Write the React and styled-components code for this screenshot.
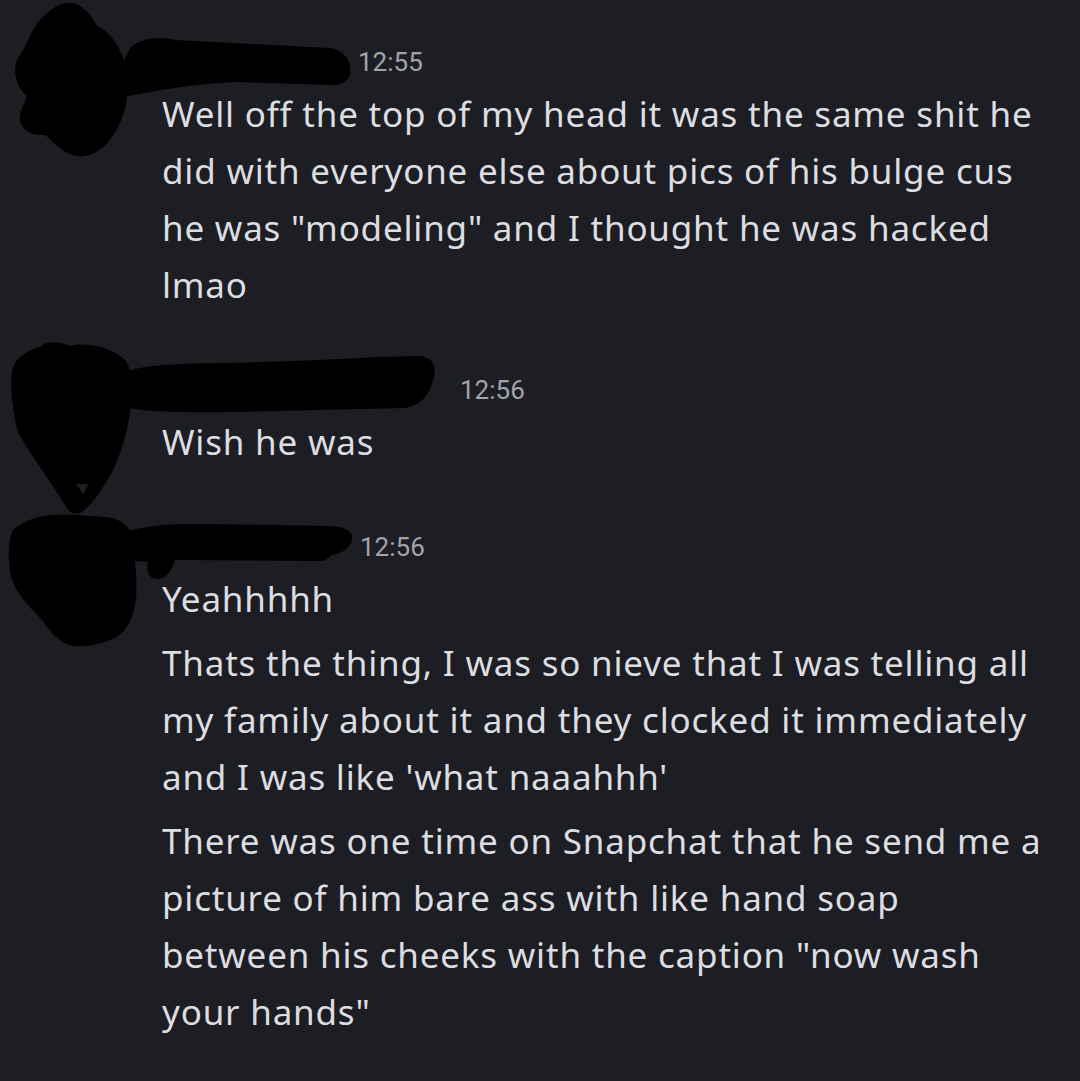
import React from "react";
import styled, { createGlobalStyle } from "styled-components";

const GlobalStyle = createGlobalStyle`
  html, body {
    margin: 0;
    padding: 0;
    background: #1d1e23;
  }
  body {
    font-family: "Noto Sans", "Open Sans", sans-serif;
    -webkit-font-smoothing: antialiased;
  }
`;

const Page = styled.div`
  min-height: 1081px;
  background: #1d1e23;
  padding: 45px 34px 0 0;
  box-sizing: border-box;
  display: flex;
  flex-direction: column;
  gap: 60px;
`;

const Message = styled.div`
  position: relative;
  display: grid;
  grid-template-columns: 162px 1fr;
`;

const AvatarSlot = styled.div`
  width: 162px;
`;

const Body = styled.div`
  display: flex;
  flex-direction: column;
  min-width: 0;
`;

const Header = styled.div`
  display: flex;
  align-items: center;
  height: 34px;
  margin-bottom: 6px;
  gap: 6px;
`;

const Name = styled.span`
  display: inline-block;
  width: ${(p) => p.$width}px;
  height: 30px;
`;

const Time = styled.span`
  font-family: Roboto, "Noto Sans", sans-serif;
  font-size: 26px;
  color: #a1a4ab;
`;

const Paragraph = styled.p`
  margin: 0;
  font-size: 35px;
  letter-spacing: 0.8px;
  line-height: 57px;
  color: #dcdde1;
  & + & {
    margin-top: 7px;
  }
`;

const Scribble = styled.svg`
  position: absolute;
  left: 0;
  top: 0;
  overflow: visible;
  pointer-events: none;
`;

const redactions = {
  first: (
    <>
      <path d="M68 3C82 2 92 16 97 26C112 32 124 52 128 75C130 100 122 125 110 140C100 152 88 158 78 156C62 154 52 140 45 135C30 136 18 128 20 115C22 105 28 100 26 95C14 85 12 65 20 55C28 45 32 25 45 15C52 8 60 3 68 3Z" />
      <path d="M130 48C140 38 160 36 175 40L330 48C345 50 352 62 350 74C348 82 340 86 330 85L235 82C190 84 150 92 128 96L120 70Z" />
    </>
  ),
  second: (
    <>
      <path d="M40 347C48 340 60 342 70 346C85 342 110 346 125 360C134 372 133 395 130 413C126 440 118 460 112 472C102 490 92 505 82 512C74 516 68 512 65 505C50 480 30 455 18 432C12 410 10 385 12 372C14 358 28 350 40 347Z" />
      <path d="M125 372C150 362 200 364 260 362C330 360 390 356 418 356C432 356 437 366 434 376C430 396 420 406 405 408L235 412C190 413 150 412 128 408Z" />
      <path d="M76 484L89 484L83 494Z" fill="#1d1e23" />
    </>
  ),
  third: (
    <>
      <path d="M13 530C25 520 40 515 55 515C75 514 95 516 112 518C128 522 135 535 134 550C136 570 138 592 135 605C132 620 126 632 115 638C100 645 85 647 73 646C60 644 50 632 42 620C28 605 12 590 10 570C8 555 8 540 13 530Z" />
      <path d="M118 535C140 525 170 524 200 524L330 526C345 526 354 532 352 540C350 550 340 553 330 556C328 560 322 562 315 561L175 560C172 570 166 580 156 579C148 578 146 570 148 562L125 560Z" />
    </>
  ),
};

function Redaction({ shape, top }) {
  return (
    <Scribble width="460" height="200" viewBox={`0 ${top} 460 200`}>
      <g fill="#000">{redactions[shape]}</g>
    </Scribble>
  );
}

const messages = [
  {
    id: "m1",
    shape: "first",
    top: 45,
    nameWidth: 190,
    time: "12:55",
    paragraphs: [
      'Well off the top of my head it was the same shit he did with everyone else about pics of his bulge cus he was "modeling" and I thought he was hacked lmao',
    ],
  },
  {
    id: "m2",
    shape: "second",
    top: 373,
    nameWidth: 292,
    time: "12:56",
    paragraphs: ["Wish he was"],
  },
  {
    id: "m3",
    shape: "third",
    top: 530,
    nameWidth: 192,
    time: "12:56",
    paragraphs: [
      "Yeahhhhh",
      "Thats the thing, I was so nieve that I was telling all my family about it and they clocked it immediately and I was like 'what naaahhh'",
      'There was one time on Snapchat that he send me a picture of him bare ass with like hand soap between his cheeks with the caption "now wash your hands"',
    ],
  },
];

export default function App() {
  return (
    <>
      <GlobalStyle />
      <Page>
        {messages.map((msg) => (
          <Message key={msg.id}>
            <AvatarSlot />
            <Body>
              <Header>
                <Name $width={msg.nameWidth} />
                <Time>{msg.time}</Time>
              </Header>
              {msg.paragraphs.map((text, i) => (
                <Paragraph key={i}>{text}</Paragraph>
              ))}
            </Body>
            <Redaction shape={msg.shape} top={msg.top} />
          </Message>
        ))}
      </Page>
    </>
  );
}
